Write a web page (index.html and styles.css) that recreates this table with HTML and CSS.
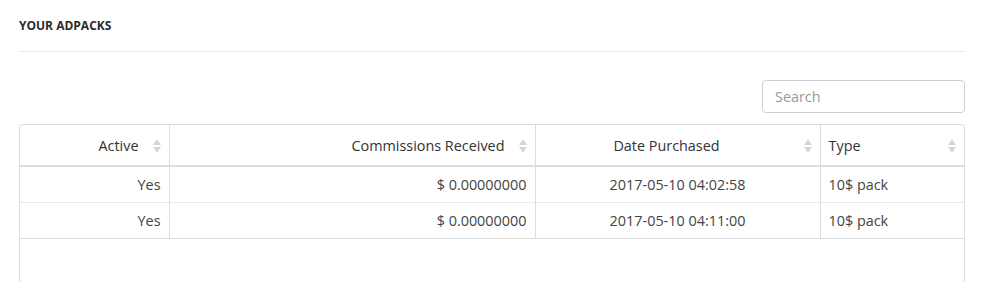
FILE: index.html
```html
<!DOCTYPE html>
<html lang="en">

<head>
    <meta charset="UTF-8">
    <title>Your Adpacks</title>
    <link rel="stylesheet" href="styles.css">
</head>

<body>
    <div class="panel">
        <h4 class="panel-title">YOUR ADPACKS</h4>

        <div class="toolbar">
            <input class="search" type="text" placeholder="Search">
        </div>

        <div class="table-wrap">
            <table class="packs">
                <thead>
                    <tr>
                        <th class="col-active">Active<span class="sort"></span></th>
                        <th class="col-comm">Commissions Received<span class="sort"></span></th>
                        <th class="col-date">Date Purchased<span class="sort"></span></th>
                        <th class="col-type">Type<span class="sort"></span></th>
                    </tr>
                </thead>
                <tbody>
                    <tr>
                        <td class="right">Yes</td>
                        <td class="right">$ 0.00000000</td>
                        <td class="center">2017-05-10 04:02:58</td>
                        <td>10$ pack</td>
                    </tr>
                    <tr>
                        <td class="right">Yes</td>
                        <td class="right">$ 0.00000000</td>
                        <td class="center">2017-05-10 04:11:00</td>
                        <td>10$ pack</td>
                    </tr>
                </tbody>
            </table>
        </div>
    </div>
</body>

</html>
```

FILE: styles.css
```css
* {
    margin: 0;
    padding: 0;
    box-sizing: border-box;
}

body {
    background: #fff;
    font-family: 'Open Sans', sans-serif;
    color: #333;
    padding: 0 16px 0 19px;
}

.panel {
    width: 946px;
}

.panel-title {
    font-size: 12px;
    font-weight: 700;
    color: #2b2b2b;
    padding: 17px 0 17px;
    border-bottom: 1px solid #ebebeb;
}

.toolbar {
    display: flex;
    justify-content: flex-end;
    padding: 28px 0 11px;
}

.search {
    width: 203px;
    height: 33px;
    border: 1px solid #c8d0da;
    border-radius: 4px;
    padding: 0 12px;
    font-family: inherit;
    font-size: 14.4px;
    color: #555;
    outline: none;
}

.search::placeholder {
    color: #999;
}

.table-wrap {
    border: 1px solid #ddd;
    border-bottom: none;
    border-radius: 4px 4px 0 0;
    min-height: 200px;
}

.packs {
    width: 100%;
    border-collapse: collapse;
    font-size: 14.4px;
}

.packs th {
    position: relative;
    font-weight: 400;
    color: #333;
    height: 41px;
    padding: 0 30px 0 8px;
    border-bottom: 2px solid #ddd;
    border-left: 1px solid #ddd;
}

.packs th:first-child,
.packs td:first-child {
    border-left: none;
}

.packs td {
    height: 36px;
    padding: 0 8px;
    color: #444;
    border-top: 1px solid #e8ecef;
    border-left: 1px solid #ddd;
}

.packs tbody tr:last-child td {
    border-bottom: 1px solid #ddd;
}

.col-active { width: 149px; text-align: right; }
.col-comm { width: 366px; text-align: right; }
.col-date { width: 285px; text-align: center; }
.col-type { text-align: left; }

.right { text-align: right; }
.center { text-align: center; }

/* up/down sort arrows */
.sort {
    position: absolute;
    right: 8px;
    top: 14px;
    width: 8px;
    height: 14px;
}

.sort::before,
.sort::after {
    content: "";
    position: absolute;
    left: 0;
    border-left: 4px solid transparent;
    border-right: 4px solid transparent;
}

.sort::before {
    top: 0;
    border-bottom: 6px solid #d6d6d6;
}

.sort::after {
    bottom: 0;
    border-top: 6px solid #d6d6d6;
}
```
